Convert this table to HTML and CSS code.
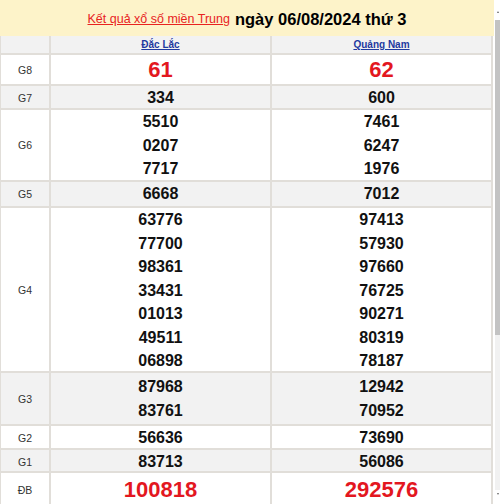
FILE: index.html
```html
<!DOCTYPE html>
<html lang="vi">
<head>
<meta charset="utf-8">
<title>Kết quả xổ số miền Trung</title>
<link rel="stylesheet" href="styles.css">
</head>
<body>
<div class="page">
  <div class="content">
    <div class="title">
      <a class="title-link" href="#">Kết quả xổ số miền Trung</a>
      <span class="title-date">ngày 06/08/2024 thứ 3</span>
    </div>
    <div class="results">
      <div class="row head alt h19">
        <div class="cell label"></div>
        <div class="cell"><a class="prov" href="#">Đắc Lắc</a></div>
        <div class="cell"><a class="prov" href="#">Quảng Nam</a></div>
      </div>
      <div class="row h31">
        <div class="cell label">G8</div>
        <div class="cell big">61</div>
        <div class="cell big">62</div>
      </div>
      <div class="row alt h24">
        <div class="cell label">G7</div>
        <div class="cell num">334</div>
        <div class="cell num">600</div>
      </div>
      <div class="row h72">
        <div class="cell label">G6</div>
        <div class="cell num"><span>5510</span><span>0207</span><span>7717</span></div>
        <div class="cell num"><span>7461</span><span>6247</span><span>1976</span></div>
      </div>
      <div class="row alt h26">
        <div class="cell label">G5</div>
        <div class="cell num">6668</div>
        <div class="cell num">7012</div>
      </div>
      <div class="row h165">
        <div class="cell label">G4</div>
        <div class="cell num"><span>63776</span><span>77700</span><span>98361</span><span>33431</span><span>01013</span><span>49511</span><span>06898</span></div>
        <div class="cell num"><span>97413</span><span>57930</span><span>97660</span><span>76725</span><span>90271</span><span>80319</span><span>78187</span></div>
      </div>
      <div class="row alt h53">
        <div class="cell label">G3</div>
        <div class="cell num"><span>87968</span><span>83761</span></div>
        <div class="cell num"><span>12942</span><span>70952</span></div>
      </div>
      <div class="row h24">
        <div class="cell label">G2</div>
        <div class="cell num">56636</div>
        <div class="cell num">73690</div>
      </div>
      <div class="row alt h23">
        <div class="cell label">G1</div>
        <div class="cell num">83713</div>
        <div class="cell num">56086</div>
      </div>
      <div class="row h33 last">
        <div class="cell label">ĐB</div>
        <div class="cell big">100818</div>
        <div class="cell big">292576</div>
      </div>
    </div>
  </div>
  <div class="scrollbar">
    <div class="arrow up"></div>
    <div class="track">
      <div class="thumb"></div>
    </div>
    <div class="arrow down"></div>
  </div>
</div>
</body>
</html>
```
FILE: styles.css
```css
* { box-sizing: border-box; }
html, body { margin: 0; padding: 0; background: #fff; }
body { font-family: "Liberation Sans", Arial, sans-serif; color: #111; }

.page { display: flex; width: 500px; height: 504px; overflow: hidden; }
.content { width: 494px; flex: none; }

.title {
  height: 36px;
  background: #fdf3c9;
  display: flex;
  align-items: center;
  justify-content: center;
  gap: 5px;
  padding: 2px 0 0 0;
}
.title-link { color: #e8231f; font-size: 12.5px; text-decoration: underline; }
.title-date { font-size: 16.5px; font-weight: bold; color: #000; }

.results { width: 493px; border-left: 1px solid #e1ded9; }
.row {
  display: grid;
  grid-template-columns: 50px 221px 221px;
  border-bottom: 2px solid #e1ded9;
  background: #fff;
}
.row.alt { background: #f2f2f2; }
.row.last { border-bottom: none; }
.cell {
  border-right: 2px solid #e1ded9;
  display: flex;
  flex-direction: column;
  align-items: center;
  justify-content: center;
}
.cell.label { font-size: 10.5px; color: #333; }
.prov { font-size: 10px; font-weight: bold; color: #1f3aa0; text-decoration: underline; }
.num { font-size: 16px; font-weight: bold; color: #111; line-height: 23.5px; }
.num span { display: block; }
.big { font-size: 22px; font-weight: bold; color: #e3171f; line-height: 26px; }

.h19 { height: 19px; }
.h23 { height: 23px; }
.h24 { height: 24px; }
.h26 { height: 26px; }
.h31 { height: 31px; }
.h33 { height: 33px; }
.h53 { height: 53px; }
.h72 { height: 72px; }
.h165 { height: 165px; }

.scrollbar {
  width: 5px;
  margin-left: 1px;
  display: flex;
  flex-direction: column;
  align-items: center;
}
.arrow { width: 0; height: 0; border-left: 1.5px solid transparent; border-right: 1.5px solid transparent; }
.arrow.up { border-bottom: 2px solid #666; margin: 11px 0 7px; }
.arrow.down { border-top: 2px solid #666; margin: 3px 0 0; }
.track { width: 5px; height: 470px; background: #f1f1f1; }
.thumb { width: 5px; height: 315px; background: #c3c3c3; }
```
